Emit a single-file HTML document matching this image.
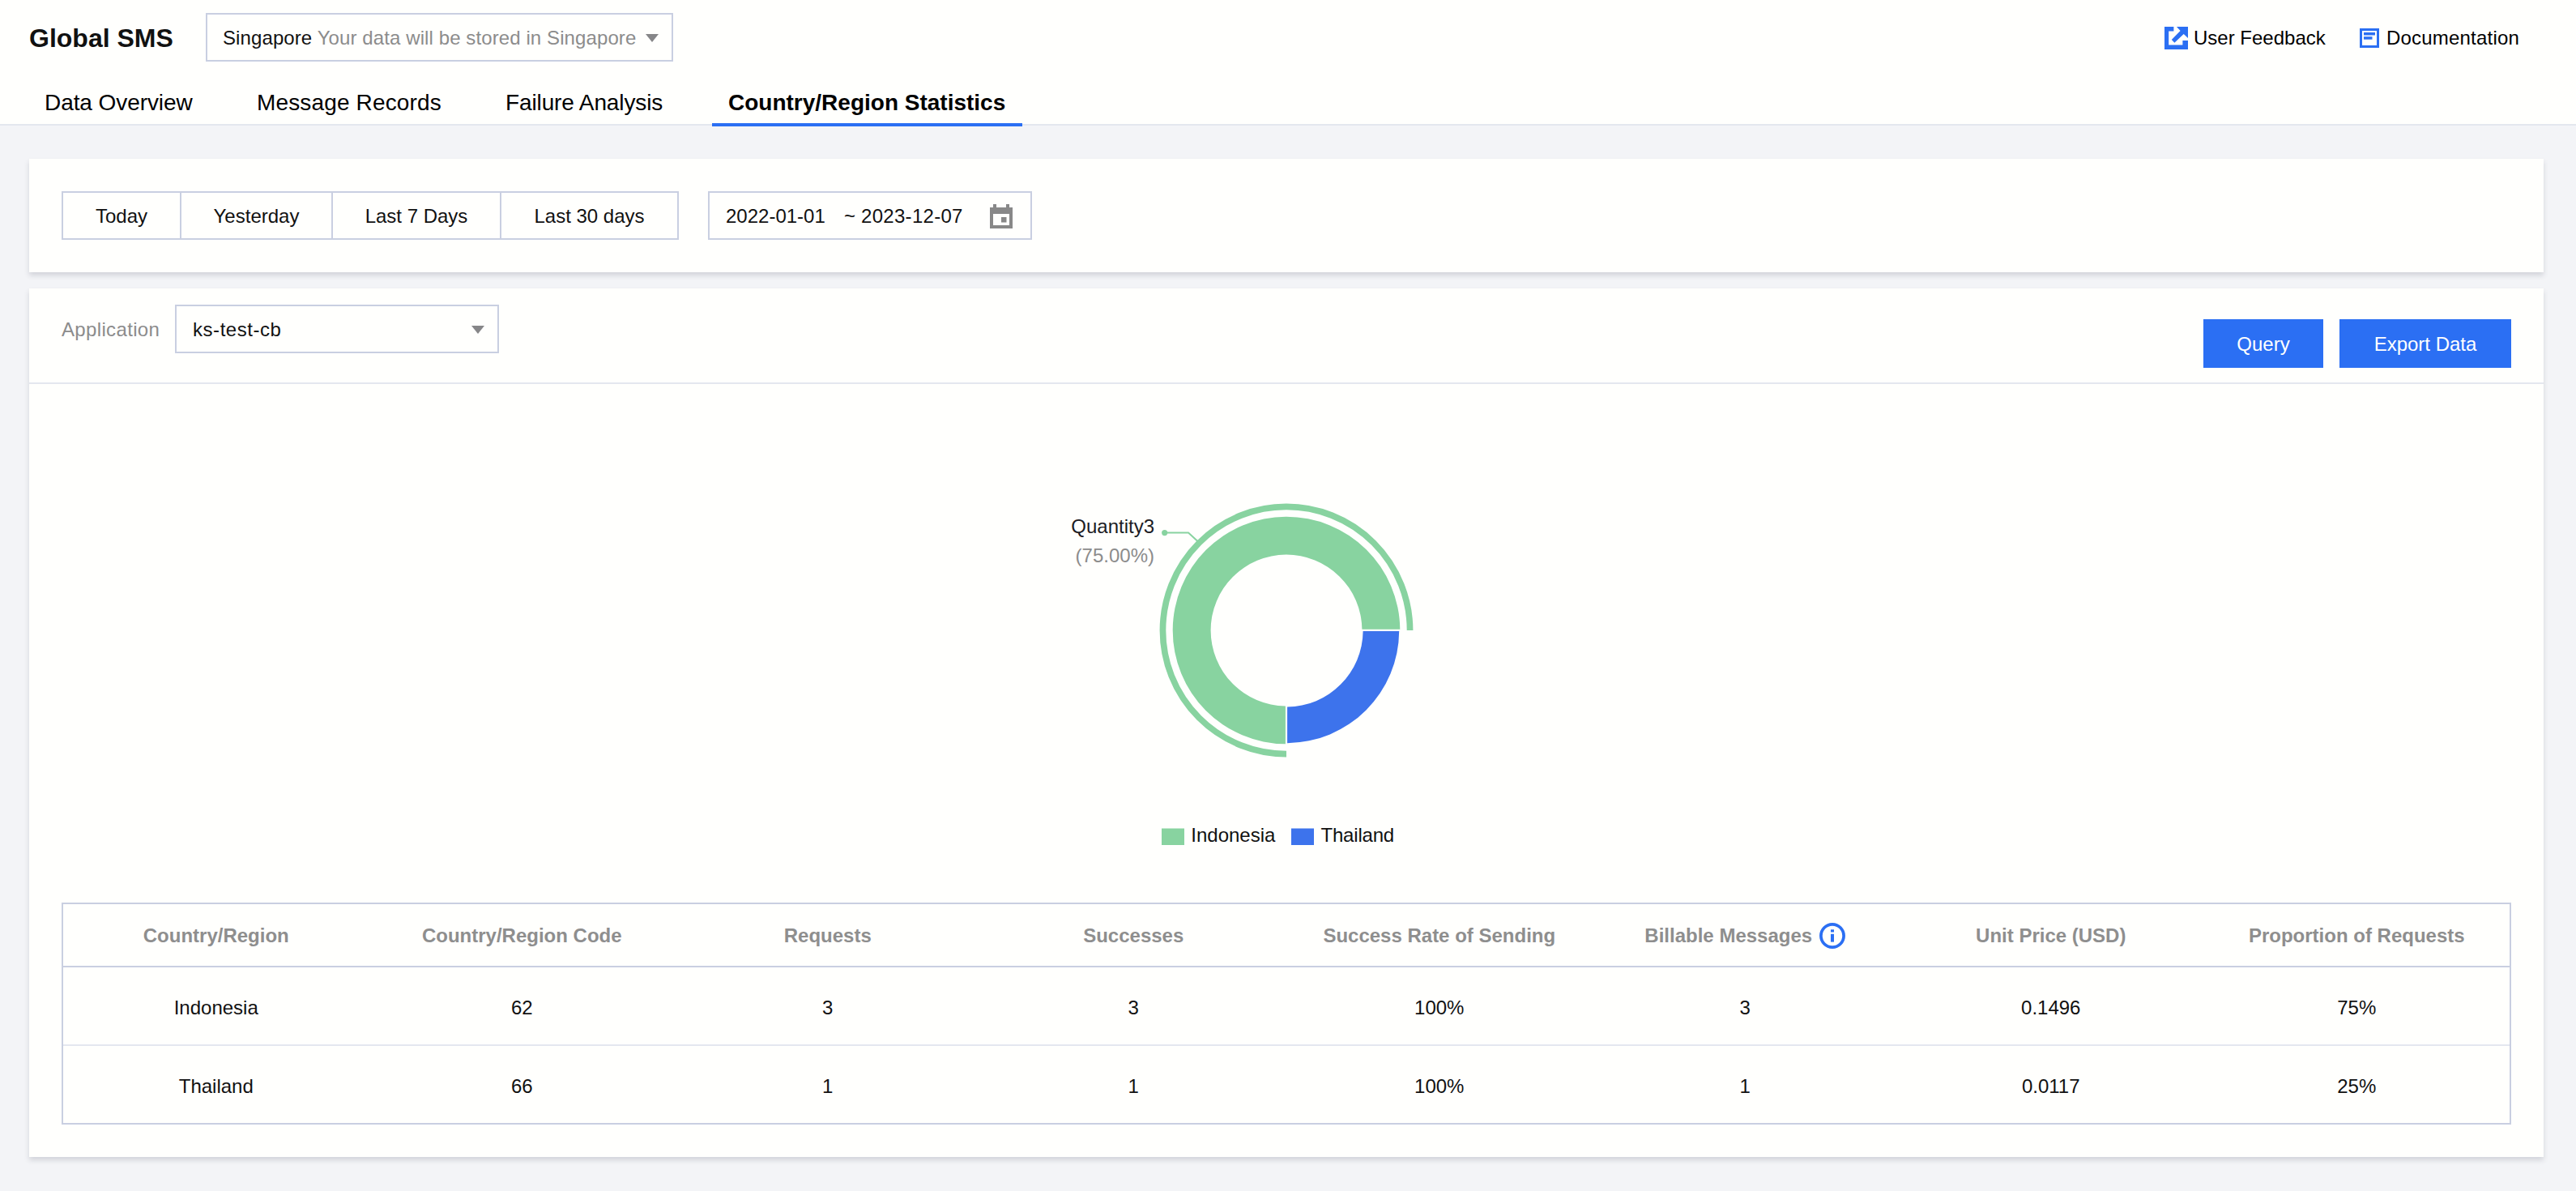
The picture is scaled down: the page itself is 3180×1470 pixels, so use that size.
<!DOCTYPE html>
<html lang="en">
<head>
<meta charset="utf-8">
<title>Global SMS - Country/Region Statistics</title>
<style>
*{box-sizing:border-box;margin:0;padding:0}
html,body{width:3180px;height:1470px;overflow:hidden}
body{background:#f3f4f7;font-family:"Liberation Sans",Arial,Helvetica,sans-serif;font-size:24px;color:#000;position:relative}
.abs{position:absolute;white-space:nowrap}
.header{position:absolute;left:0;top:0;width:3180px;height:155px;background:#fffffd;border-bottom:2px solid #e4e7ee}
.title{left:36px;top:19px;height:56px;line-height:56px;font-size:32px;font-weight:bold;color:#111}
.region{left:254px;top:16px;width:577px;height:60px;border:2px solid #c9cfe1;background:#fffffd;line-height:58px;padding-left:19px;color:#111;letter-spacing:.1px}
.region .hint{color:#8c8c8c}
.tri{position:absolute;width:0;height:0;border-left:8px solid transparent;border-right:8px solid transparent;border-top:10px solid #868688}
.tab{top:103px;height:48px;line-height:48px;font-size:28px;color:#000}
.tab.on{font-weight:bold}
.tabline{left:879px;top:152px;width:383px;height:4px;background:#2b6ff3}
.hlink{top:19px;height:56px;line-height:56px;color:#000}
.card{position:absolute;left:36px;width:3104px;background:#fffffd;box-shadow:0 4px 6px 0 rgba(54,58,80,.17)}
.seg{top:40px;height:60px;border:2px solid #c9cfe1;line-height:58px;text-align:center;color:#111;background:#fffffd}
.datebox{left:838px;top:40px;width:400px;height:60px;border:2px solid #c9cfe1;line-height:58px;color:#111}
.label{color:#8c8c8c}
.select{left:180px;top:20px;width:400px;height:60px;border:2px solid #c9cfe1;line-height:58px;padding-left:20px;color:#111;letter-spacing:.55px}
.btn{top:38px;height:60px;line-height:62px;background:#2b6ff3;color:#fff;text-align:center}
.hr{left:0;top:116px;width:3104px;height:2px;background:#e4e7ef}
.tbl{position:absolute;left:40px;top:758px;width:3024px;height:274px;border:2px solid #c9cfe1}
.row{display:flex;width:3020px}
.row>div{flex:1 1 0;text-align:center;line-height:28px;white-space:nowrap}
.row.h{height:78px;border-bottom:2px solid #c9cfe1;color:#8e8e8e;font-weight:bold}
.row.h>div{padding-top:25px}
.row.d{height:95px;color:#111}
.row.d>div{padding-top:36px}
.row.r1{height:97px;border-bottom:2px solid #e4e7ef}
.infow{display:inline-block;position:relative;width:41px;height:1px;vertical-align:baseline}
.info{position:absolute;left:9px;top:-23px}
</style>
</head>
<body>

<div class="header">
  <div class="abs title">Global SMS</div>
  <div class="abs region">Singapore <span class="hint">Your data will be stored in Singapore</span><i class="tri" style="left:541px;top:24px"></i></div>

  <div class="abs tab" style="left:55px;letter-spacing:-.08px">Data Overview</div>
  <div class="abs tab" style="left:317px;letter-spacing:.15px">Message Records</div>
  <div class="abs tab" style="left:624px;letter-spacing:-.12px">Failure Analysis</div>
  <div class="abs tab on" style="left:899px">Country/Region Statistics</div>
  <div class="abs tabline"></div>

  <svg class="abs" style="left:2672px;top:33px" width="29" height="28" viewBox="0 0 29 28">
    <path fill="#2b6ff3" d="M0 0H11.4V5.5H5.2V22.5H22.4V16.9H29V28H0Z"/>
    <path fill="#2b6ff3" d="M15 0H29V14L23.7 9.1L12.4 19.7L8.8 15.9L19.6 5.1Z"/>
  </svg>
  <div class="abs hlink" style="left:2708px">User Feedback</div>
  <svg class="abs" style="left:2913px;top:35px" width="24" height="24" viewBox="0 0 24 24">
    <path fill="#2b6ff3" fill-rule="evenodd" d="M0 0H24V24H0ZM3 3V21H21V3Z"/>
    <rect x="5" y="5" width="14" height="3.5" fill="#2b6ff3"/>
    <rect x="5" y="10.2" width="10.5" height="3.5" fill="#2b6ff3"/>
  </svg>
  <div class="abs hlink" style="left:2946px;letter-spacing:.2px">Documentation</div>
</div>

<div class="card" style="top:196px;height:140px">
  <div class="abs seg" style="left:40px;width:148px">Today</div>
  <div class="abs seg" style="left:186px;width:189px">Yesterday</div>
  <div class="abs seg" style="left:373px;width:210px">Last 7 Days</div>
  <div class="abs seg" style="left:581px;width:221px">Last 30 days</div>
  <div class="abs datebox">
    <span class="abs" style="left:20px;top:0">2022-01-01</span>
    <span class="abs" style="left:166px;top:0">~</span>
    <span class="abs" style="left:187px;top:0;letter-spacing:.3px">2023-12-07</span>
    <svg class="abs" style="left:346px;top:14px" width="28" height="30" viewBox="0 0 28 30">
      <rect x="0" y="4" width="28" height="26" fill="#888"/>
      <rect x="4" y="0" width="4" height="5" fill="#888"/>
      <rect x="20" y="0" width="4" height="5" fill="#888"/>
      <rect x="4" y="12" width="20" height="14" fill="#fffffd"/>
      <rect x="14" y="16" width="6.5" height="6.5" fill="#888"/>
    </svg>
  </div>
</div>

<div class="card" style="top:356px;height:1072px">
  <div class="abs label" style="left:40px;top:20px;height:60px;line-height:62px;letter-spacing:.35px">Application</div>
  <div class="abs select">ks-test-cb<i class="tri" style="left:364px;top:24px"></i></div>
  <div class="abs btn" style="left:2684px;width:148px">Query</div>
  <div class="abs btn" style="left:2852px;width:212px">Export Data</div>
  <div class="abs hr"></div>

  <svg class="abs" style="left:1200px;top:200px" width="700" height="520" viewBox="1236 556 700 520" font-family="Liberation Sans, Arial, sans-serif" font-size="24">
    <!-- outer highlight arc -->
    <path d="M1740.55 778A152.55 152.55 0 1 0 1588 930.55" fill="none" stroke="#88d3a0" stroke-width="7.7"/>
    <!-- Indonesia 75% -->
    <path d="M1728.3 776.8A140.3 140.3 0 1 0 1586.9 918.3V871.4A93.4 93.4 0 1 1 1681.4 776.8Z" fill="#88d3a0"/>
    <!-- Thailand 25% -->
    <path d="M1727.2 779A139.2 139.2 0 0 1 1589.1 917.2V872.6A94.6 94.6 0 0 0 1682.6 779Z" fill="#3d73ec"/>
    <!-- label -->
    <circle cx="1437.7" cy="657.6" r="3.6" fill="#88d3a0"/>
    <path d="M1437.7 657.6H1467L1479 668.5" fill="none" stroke="#88d3a0" stroke-width="2"/>
    <text x="1425" y="658" text-anchor="end" fill="#1c1c24">Quantity3</text>
    <text x="1425" y="694" text-anchor="end" fill="#8c8c8c">(75.00%)</text>
    <!-- legend -->
    <rect x="1434" y="1022.5" width="28" height="20.5" fill="#88d3a0"/>
    <text x="1470.3" y="1039" fill="#111">Indonesia</text>
    <rect x="1594" y="1022.5" width="28" height="20.5" fill="#3d73ec"/>
    <text x="1630.5" y="1039" fill="#111" letter-spacing="-.2">Thailand</text>
  </svg>

  <div class="tbl">
    <div class="row h">
      <div>Country/Region</div><div>Country/Region Code</div><div>Requests</div><div>Successes</div><div>Success Rate of Sending</div>
      <div>Billable Messages<span class="infow"><svg class="info" width="32" height="32" viewBox="0 0 32 32"><circle cx="16" cy="16" r="14.1" fill="none" stroke="#2b6ff3" stroke-width="3.7"/><rect x="14" y="8.3" width="4" height="3.2" fill="#2b6ff3"/><rect x="14" y="13.8" width="4" height="9.8" fill="#2b6ff3"/></svg></span></div>
      <div>Unit Price (USD)</div><div>Proportion of Requests</div>
    </div>
    <div class="row d r1"><div>Indonesia</div><div>62</div><div>3</div><div>3</div><div>100%</div><div>3</div><div>0.1496</div><div>75%</div></div>
    <div class="row d"><div>Thailand</div><div>66</div><div>1</div><div>1</div><div>100%</div><div>1</div><div>0.0117</div><div>25%</div></div>
  </div>
</div>

</body>
</html>
